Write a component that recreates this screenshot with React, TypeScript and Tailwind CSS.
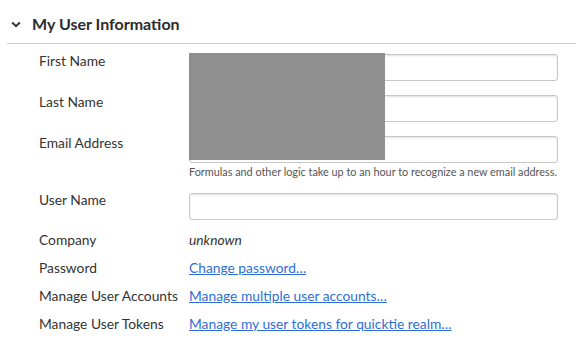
import React from "react";

const Input = () => (
  <div className="h-[27px] w-[369px] rounded-[3px] border border-[#c8c8c8] bg-white shadow-[inset_0_1px_2px_rgba(0,0,0,0.12)]" />
);

export default function App() {
  return (
    <div className="relative h-[346px] w-[576px] bg-white text-[#333] font-['Lato',sans-serif] overflow-hidden">
      <div className="ml-[7px] flex h-[44px] items-center border-b border-[#cfcfcf] pt-[4px]">
        <svg width="10" height="7" viewBox="0 0 10 7" className="ml-[4px] mr-[11px] mt-[2px]">
          <path d="M1.2 1.5 L5 5.2 L8.8 1.5" fill="none" stroke="#333" strokeWidth="2" />
        </svg>
        <span className="text-[16px] font-bold text-[#2b2b2b]">My User Information</span>
      </div>
      <div className="ml-[39px] mt-[10px] grid grid-cols-[150px_369px] gap-y-[14px] text-[13.8px] leading-[14px]">
        <div>First Name</div>
        <Input />
        <div>Last Name</div>
        <Input />
        <div>Email Address</div>
        <div>
          <Input />
          <div className="mt-[2px] whitespace-nowrap text-[10.85px] leading-[14px] text-[#555]">
            Formulas and other logic take up to an hour to recognize a new email address.
          </div>
        </div>
        <div>User Name</div>
        <Input />
        <div className="-mt-px h-[14px] leading-[14px]">Company</div>
        <div className="-mt-px h-[14px] italic leading-[14px] text-[#333]">unknown</div>
        <div className="h-[14px] leading-[14px]">Password</div>
        <div className="h-[14px] leading-[14px]">
          <a className="text-[#2f6ed8] underline" href="#">Change password…</a>
        </div>
        <div className="h-[14px] leading-[14px]">Manage User Accounts</div>
        <div className="h-[14px] leading-[14px]">
          <a className="text-[#2f6ed8] underline" href="#">Manage multiple user accounts…</a>
        </div>
        <div className="h-[14px] leading-[14px]">Manage User Tokens</div>
        <div className="h-[14px] leading-[14px]">
          <a className="text-[#2f6ed8] underline" href="#">Manage my user tokens for quicktie realm…</a>
        </div>
      </div>
      <div className="absolute left-[189px] top-[53px] h-[107px] w-[196px] bg-[#8f8f8f]" />
    </div>
  );
}
